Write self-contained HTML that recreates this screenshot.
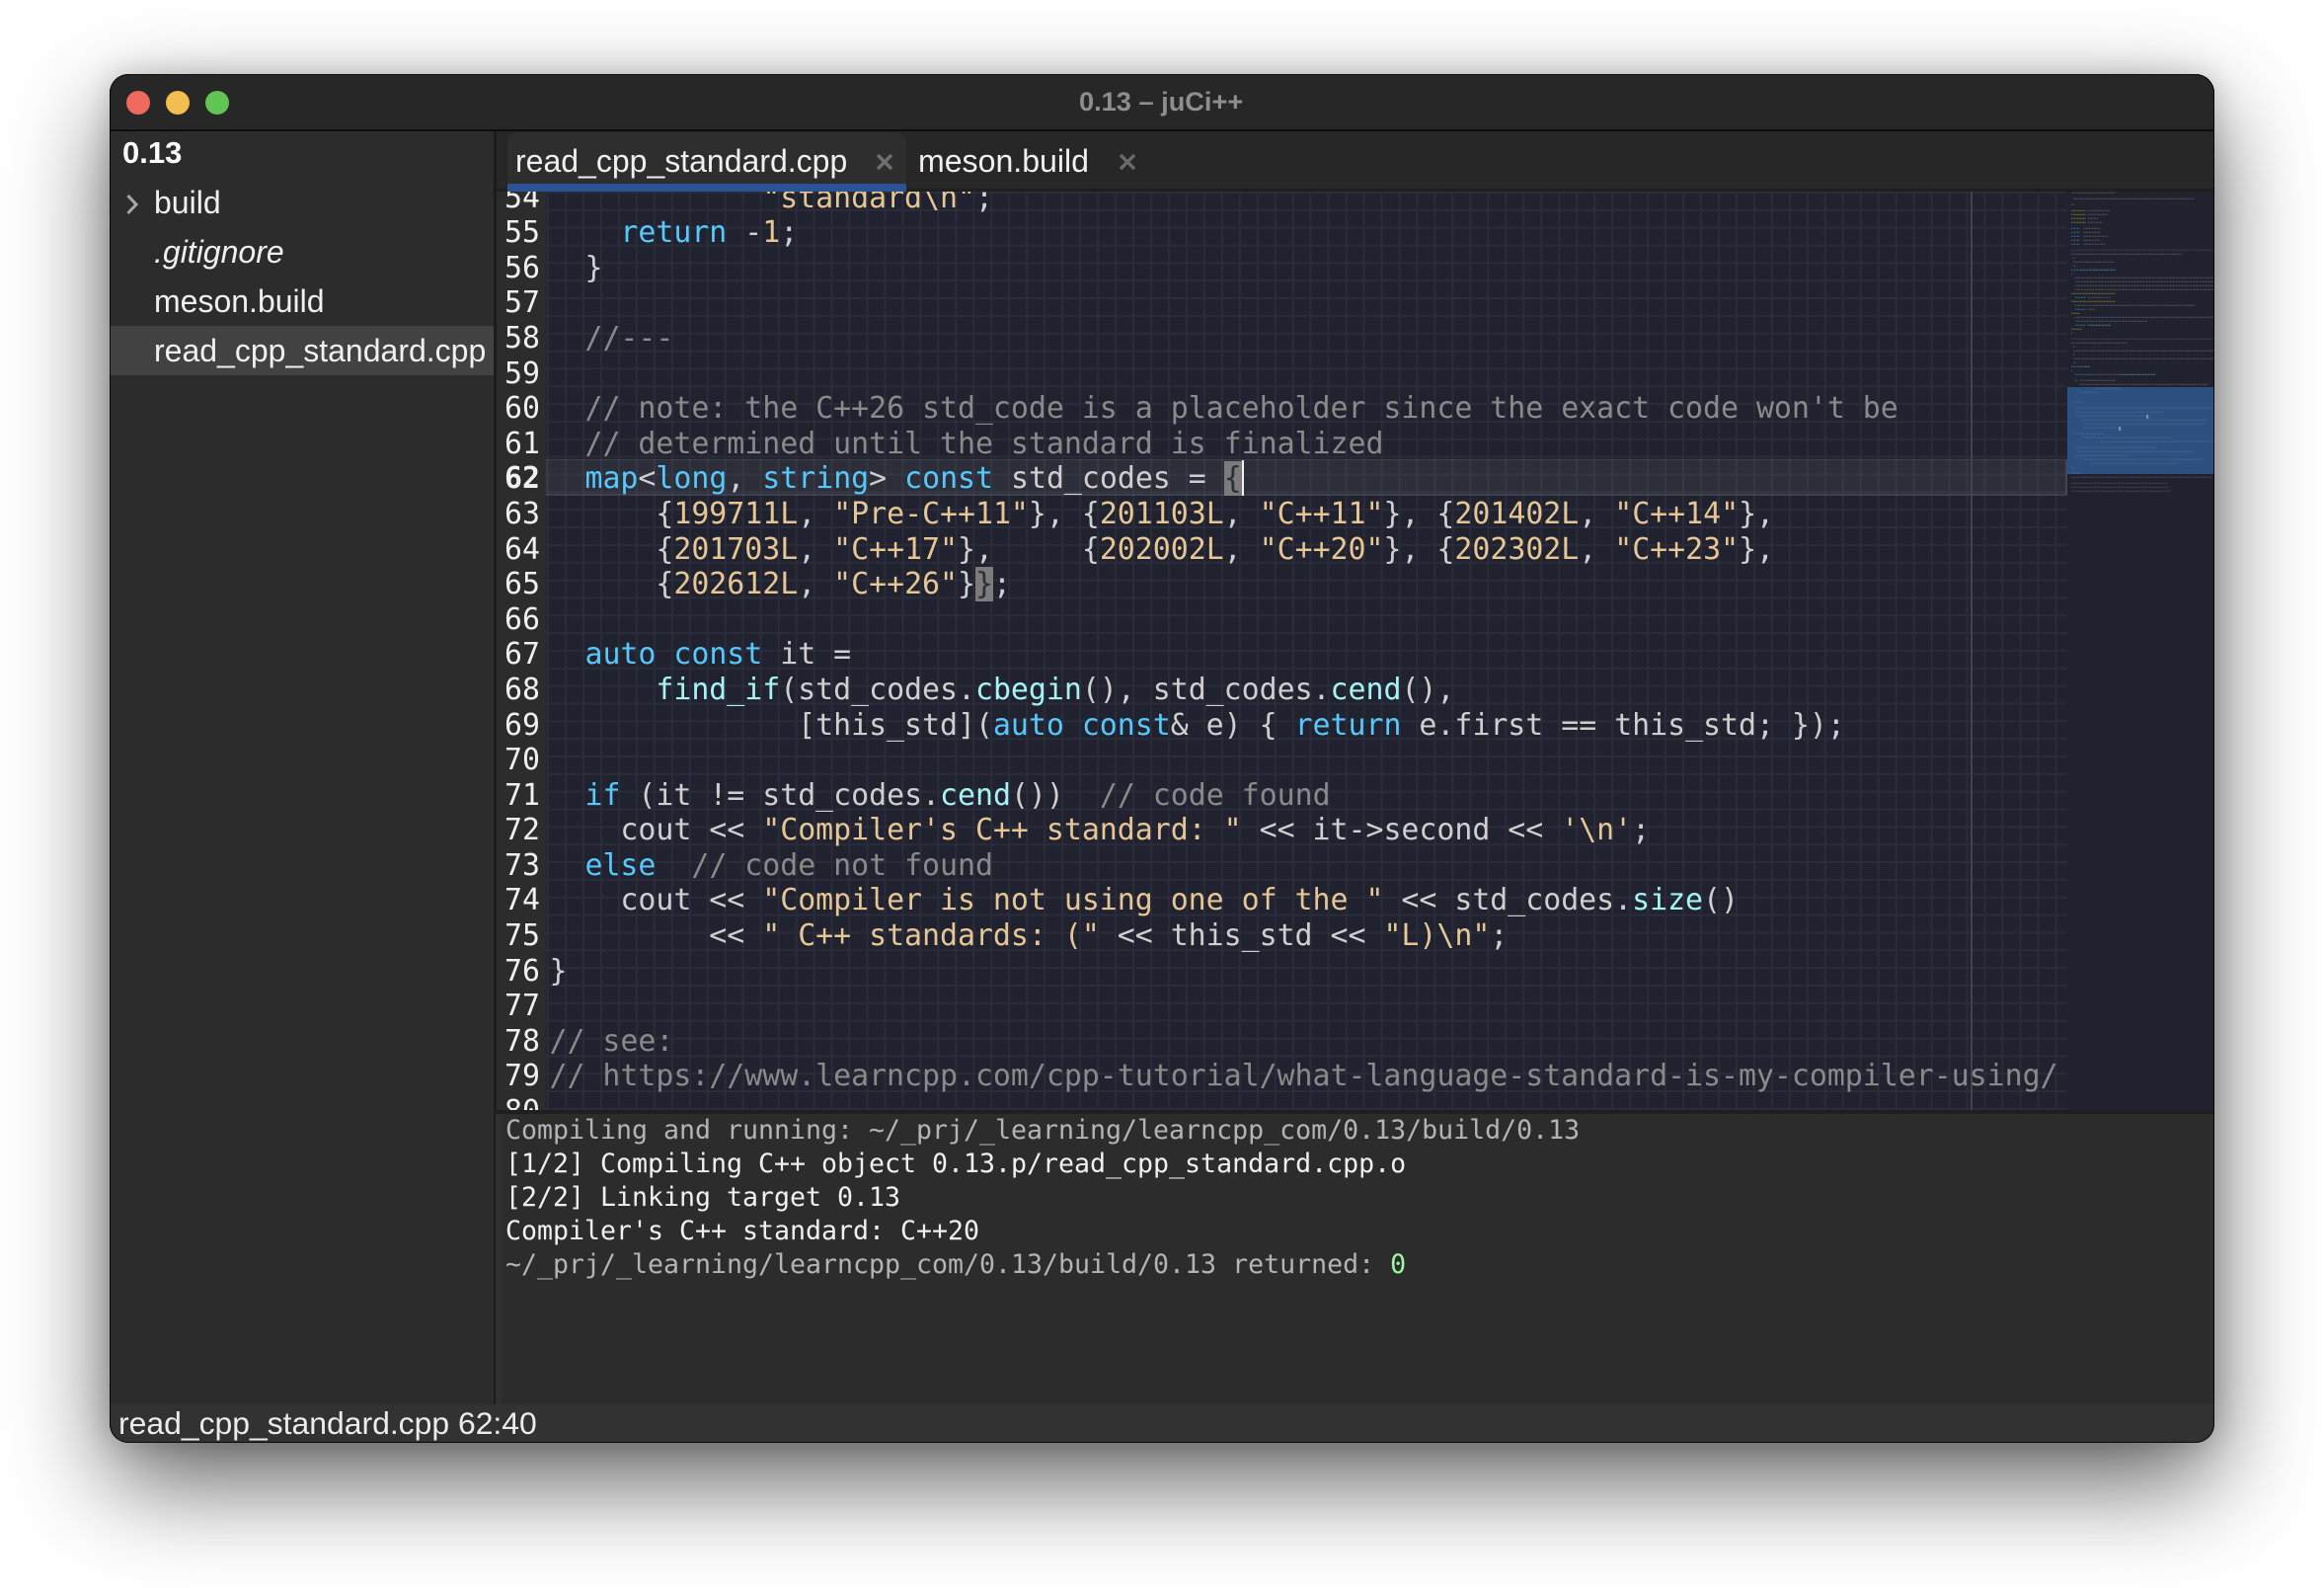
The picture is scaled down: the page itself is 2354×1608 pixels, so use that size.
<!DOCTYPE html>
<html><head><meta charset="utf-8"><title>0.13 – juCi++</title>
<style>
html,body{margin:0;padding:0;width:2354px;height:1608px;background:#fff;overflow:hidden}
*{box-sizing:border-box}
.abs,#win>div{position:absolute}
#win{position:absolute;left:111px;top:75px;width:2132px;height:1386px;border-radius:19px;background:#2c2c2c;overflow:hidden}
#shadow{position:absolute;left:111px;top:75px;width:2132px;height:1386px;border-radius:19px;box-shadow:0 40px 100px rgba(0,0,0,.62),0 0 30px rgba(0,0,0,.18)}
#ring{position:absolute;left:111px;top:75px;width:2132px;height:1386px;border-radius:19px;box-shadow:inset 0 0 0 1px rgba(0,0,0,.8);pointer-events:none}
.ui{font-family:"Liberation Sans",sans-serif;font-size:32px;color:#f0f0f0;white-space:pre;line-height:50px}
.mono{font-family:"DejaVu Sans Mono",monospace;white-space:pre}
#code{font-size:29.87px;line-height:35.6px;color:#cfcfcf}
#nums{font-size:29.87px;line-height:35.6px;color:#f0f0f0}
#term{left:401px;top:1053px;font-size:26.58px;line-height:34.1px;color:#f0f0f0}
.k{color:#56c8fb}.f{color:#a6f3f3}.s{color:#e6c695}.c{color:#8a8a8a}.g{color:#b4b4b4}
.b{background:#7b7b7b;color:#2b2d38}
</style></head><body>
<div id="shadow"></div>
<div id="win">
<!-- title bar -->
<div style="left:0;top:0;width:2132px;height:57px;background:#272727;border-top:1px solid #4d4d4d"></div>
<div style="left:0;top:56px;width:2132px;height:2px;background:#0d0d0d"></div>
<div style="left:17px;top:17px;width:24px;height:24px;border-radius:50%;background:#ee6a5f"></div>
<div style="left:57px;top:17px;width:24px;height:24px;border-radius:50%;background:#f4bd4f"></div>
<div style="left:97px;top:17px;width:24px;height:24px;border-radius:50%;background:#61c554"></div>
<div class="ui" style="left:982px;top:3px;font-size:27.2px;font-weight:bold;color:#8e8e8e">0.13 – juCi++</div>

<!-- sidebar -->
<div style="left:0;top:58px;width:389px;height:1289px;background:#2c2c2c"></div>
<div style="left:0;top:255px;width:389px;height:50px;background:#424242"></div>
<div class="ui" style="left:13px;top:55px;font-weight:bold;color:#fff;font-size:31px">0.13</div>
<svg style="position:absolute;left:16px;top:121px" width="14" height="22" viewBox="0 0 14 22"><path d="M2.5 2 L11 11 L2.5 20" fill="none" stroke="#a8a8a8" stroke-width="3"/></svg>
<div class="ui" style="left:45px;top:105px">build</div>
<div class="ui" style="left:45px;top:155px;font-style:italic">.gitignore</div>
<div class="ui" style="left:45px;top:205px">meson.build</div>
<div class="ui" style="left:45px;top:255px">read_cpp_standard.cpp</div>
<div style="left:389px;top:58px;width:3px;height:1289px;background:#1c1c1c"></div>

<!-- tabs -->
<div style="left:392px;top:58px;width:1740px;height:60px;background:#272727"></div>
<div style="left:392px;top:116px;width:1740px;height:3px;background:#1f1f1f"></div>
<div style="left:403px;top:59px;width:404px;height:59px;background:#2e2e2e;border-radius:10px 10px 0 0"></div>
<div style="left:403px;top:111px;width:404px;height:8px;background:#2b5393"></div>
<div class="ui" style="left:411px;top:63px;color:#f0f0f0">read_cpp_standard.cpp</div>
<div class="ui" style="left:819px;top:63px;font-size:32.1px;color:#f0f0f0">meson.build</div>
<svg style="position:absolute;left:776px;top:80px" width="18" height="18"><path d="M2 2L16 16M16 2L2 16" stroke="#6f6f6f" stroke-width="3.4"/></svg>
<svg style="position:absolute;left:1022px;top:80px" width="18" height="18"><path d="M2 2L16 16M16 2L2 16" stroke="#6a6a6a" stroke-width="3.4"/></svg>

<!-- editor -->
<div style="left:392px;top:119px;width:50px;height:930px;background:#2c2c2c"></div>
<div id="ed" style="left:442px;top:119px;width:1541px;height:930px;background-color:#20222f;background-image:linear-gradient(to right,#2a2c3a 2px,transparent 2px),linear-gradient(to bottom,#2a2c3a 2px,transparent 2px);background-size:17.98px 17.85px;background-position:1px 0"></div>
<div style="left:442px;top:390px;width:1541px;height:37px;background:rgba(255,255,255,.055);border:1px solid rgba(255,255,255,.075);border-right:2px solid rgba(255,255,255,.1);border-bottom:2px solid rgba(255,255,255,.08)"></div>
<div style="left:1885px;top:119px;width:2px;height:930px;background:#41434f"></div>

<!-- clipped code -->
<div style="left:392px;top:119px;width:1702px;height:930px;overflow:hidden">
<div class="mono" id="nums" style="position:absolute;left:8px;top:-11.4px">54
55
56
57
58
59
60
61
<b>62</b>
63
64
65
66
67
68
69
70
71
72
73
74
75
76
77
78
79
80</div>
<div class="mono" id="code" style="position:absolute;left:53.5px;top:-11.4px"><span class="s">            "standard\n"</span>;
    <span class="k">return</span> -<span class="s">1</span>;
  }

  <span class="c">//---</span>

  <span class="c">// note: the C++26 std_code is a placeholder since the exact code won't be</span>
  <span class="c">// determined until the standard is finalized</span>
  <span class="k">map</span>&lt;<span class="k">long</span>, <span class="k">string</span>&gt; <span class="k">const</span> std_codes = <span class="b">{</span>
      {<span class="s">199711L</span>, <span class="s">"Pre-C++11"</span>}, {<span class="s">201103L</span>, <span class="s">"C++11"</span>}, {<span class="s">201402L</span>, <span class="s">"C++14"</span>},
      {<span class="s">201703L</span>, <span class="s">"C++17"</span>},     {<span class="s">202002L</span>, <span class="s">"C++20"</span>}, {<span class="s">202302L</span>, <span class="s">"C++23"</span>},
      {<span class="s">202612L</span>, <span class="s">"C++26"</span>}<span class="b">}</span>;

  <span class="k">auto</span> <span class="k">const</span> it =
      <span class="f">find_if</span>(std_codes.<span class="f">cbegin</span>(), std_codes.<span class="f">cend</span>(),
              [this_std](<span class="k">auto</span> <span class="k">const</span>&amp; e) { <span class="k">return</span> e.first == this_std; });

  <span class="k">if</span> (it != std_codes.<span class="f">cend</span>())  <span class="c">// code found</span>
    cout &lt;&lt; <span class="s">"Compiler's C++ standard: "</span> &lt;&lt; it-&gt;second &lt;&lt; <span class="s">'\n'</span>;
  <span class="k">else</span>  <span class="c">// code not found</span>
    cout &lt;&lt; <span class="s">"Compiler is not using one of the "</span> &lt;&lt; std_codes.<span class="f">size</span>()
         &lt;&lt; <span class="s">" C++ standards: ("</span> &lt;&lt; this_std &lt;&lt; <span class="s">"L)\n"</span>;
}

<span class="c">// see:</span>
<span class="c">// https://www.learncpp.com/cpp-tutorial/what-language-standard-is-my-compiler-using/</span></div>
</div>
<div style="left:1147px;top:391px;width:2px;height:36px;background:#f0f0f0"></div>

<!-- minimap -->
<div style="left:1983px;top:119px;width:149px;height:930px;background:#20222f"></div>
<svg style="position:absolute;left:1983px;top:119px" width="149" height="360" viewBox="0 0 149 360">
<rect x="0" y="198" width="148" height="88" fill="#2e5080"/>
<g opacity=".75">
<g fill="none" stroke-width="1" stroke-dasharray="1 .5" stroke="#6a6d75">
<path d="M4 1.3H49M6 7.3H129M4 13.3H7M21 19.3H43M21 23.3H41M21 27.3H31M21 31.3H36M16 37.3H34M16 41.3H34M16 45.3H41M16 49.3H33M16 53.3H39"/>
<path d="M4 63.3H116M6 67.3H8M6 71.3H48M6 75.3H9M4 83.3H5M8 87.3H148M8 91.3H148M8 95.3H148M8 99.3H148M21 107.3H43M8 115.3H129M21 119.3H28M8 127.3H148M8 131.3H81M4 143.3H5"/>
<path d="M4 153.3H61M6 157.3H8M6 161.3H148M6 165.3H8M6 169.3H148M6 173.3H9M4 181.3H5M29 185.3H51M13 191.3H49M12 195.3H143"/>
<path d="M4 59.3H148M4 149.3H148" stroke="#4a4d58"/>
<path d="M4 289.3H148M4 295.3H101M4 299.3H103M4 303.3H105" stroke="#565a64"/>
</g>
<g fill="none" stroke-width="1" stroke-dasharray="1 .5" stroke="#a89a2a">
<path d="M4 19.3H19M4 23.3H19M4 27.3H19M4 31.3H19M4 103.3H49M4 111.3H49M4 123.3H13M4 139.3H15"/>
</g>
<g fill="none" stroke-width="1" stroke-dasharray="1 .5" stroke="#3f8fb5">
<path d="M4 37.3H13M4 41.3H13M4 45.3H13M4 49.3H13M4 53.3H13M4 79.3H14M8 107.3H19M8 119.3H19M8 135.3H19M4 177.3H11M8 185.3H28M8 191.3H11"/>
</g>
<g fill="none" stroke-width="1" stroke-dasharray="1 .5" stroke="#63a9b0">
<path d="M14 79.3H49M21 135.3H44M12 177.3H23M52 185.3H89"/>
</g>
<g fill="none" stroke-width="1" stroke-dasharray="1 .5" stroke="#4a6e9a">
<path d="M28 199.3H53M12 203.3H31M8 207.3H9M8 213.3H16M8 219.3H148M8 223.3H98M8 227.3H78M16 231.3H141M16 235.3H141M16 239.3H50M8 245.3H36M16 249.3H106M33 253.3H148M8 259.3H91M12 263.3H128M8 267.3H63M12 271.3H138M23 275.3H111M4 279.3H5M4 285.3H16"/>
</g>
</g>
<rect x="80" y="226" width="2.2" height="4" fill="#6f92c0"/>
<rect x="52" y="238" width="2.2" height="4" fill="#6f92c0"/>
</svg>

<!-- terminal -->
<div style="left:389px;top:1049px;width:1743px;height:4px;background:#1f1f1f"></div>
<div style="left:391px;top:1053px;width:1741px;height:294px;background:#2c2c2c"></div>
<div style="left:391px;top:1053px;width:6px;height:294px;background:#303030"></div>
<div class="mono" id="term" style="position:absolute"><span class="g">Compiling and running: ~/_prj/_learning/learncpp_com/0.13/build/0.13</span>
[1/2] Compiling C++ object 0.13.p/read_cpp_standard.cpp.o
[2/2] Linking target 0.13
Compiler's C++ standard: C++20
<span class="g">~/_prj/_learning/learncpp_com/0.13/build/0.13 returned: </span><span style="color:#a0f5a0">0</span></div>

<!-- status -->
<div style="left:0;top:1347px;width:2132px;height:39px;background:#323232"></div>
<div class="ui" style="left:9px;top:1341px;font-size:31.9px;color:#ececec">read_cpp_standard.cpp 62:40</div>
</div>
<div id="ring"></div>
</body></html>
